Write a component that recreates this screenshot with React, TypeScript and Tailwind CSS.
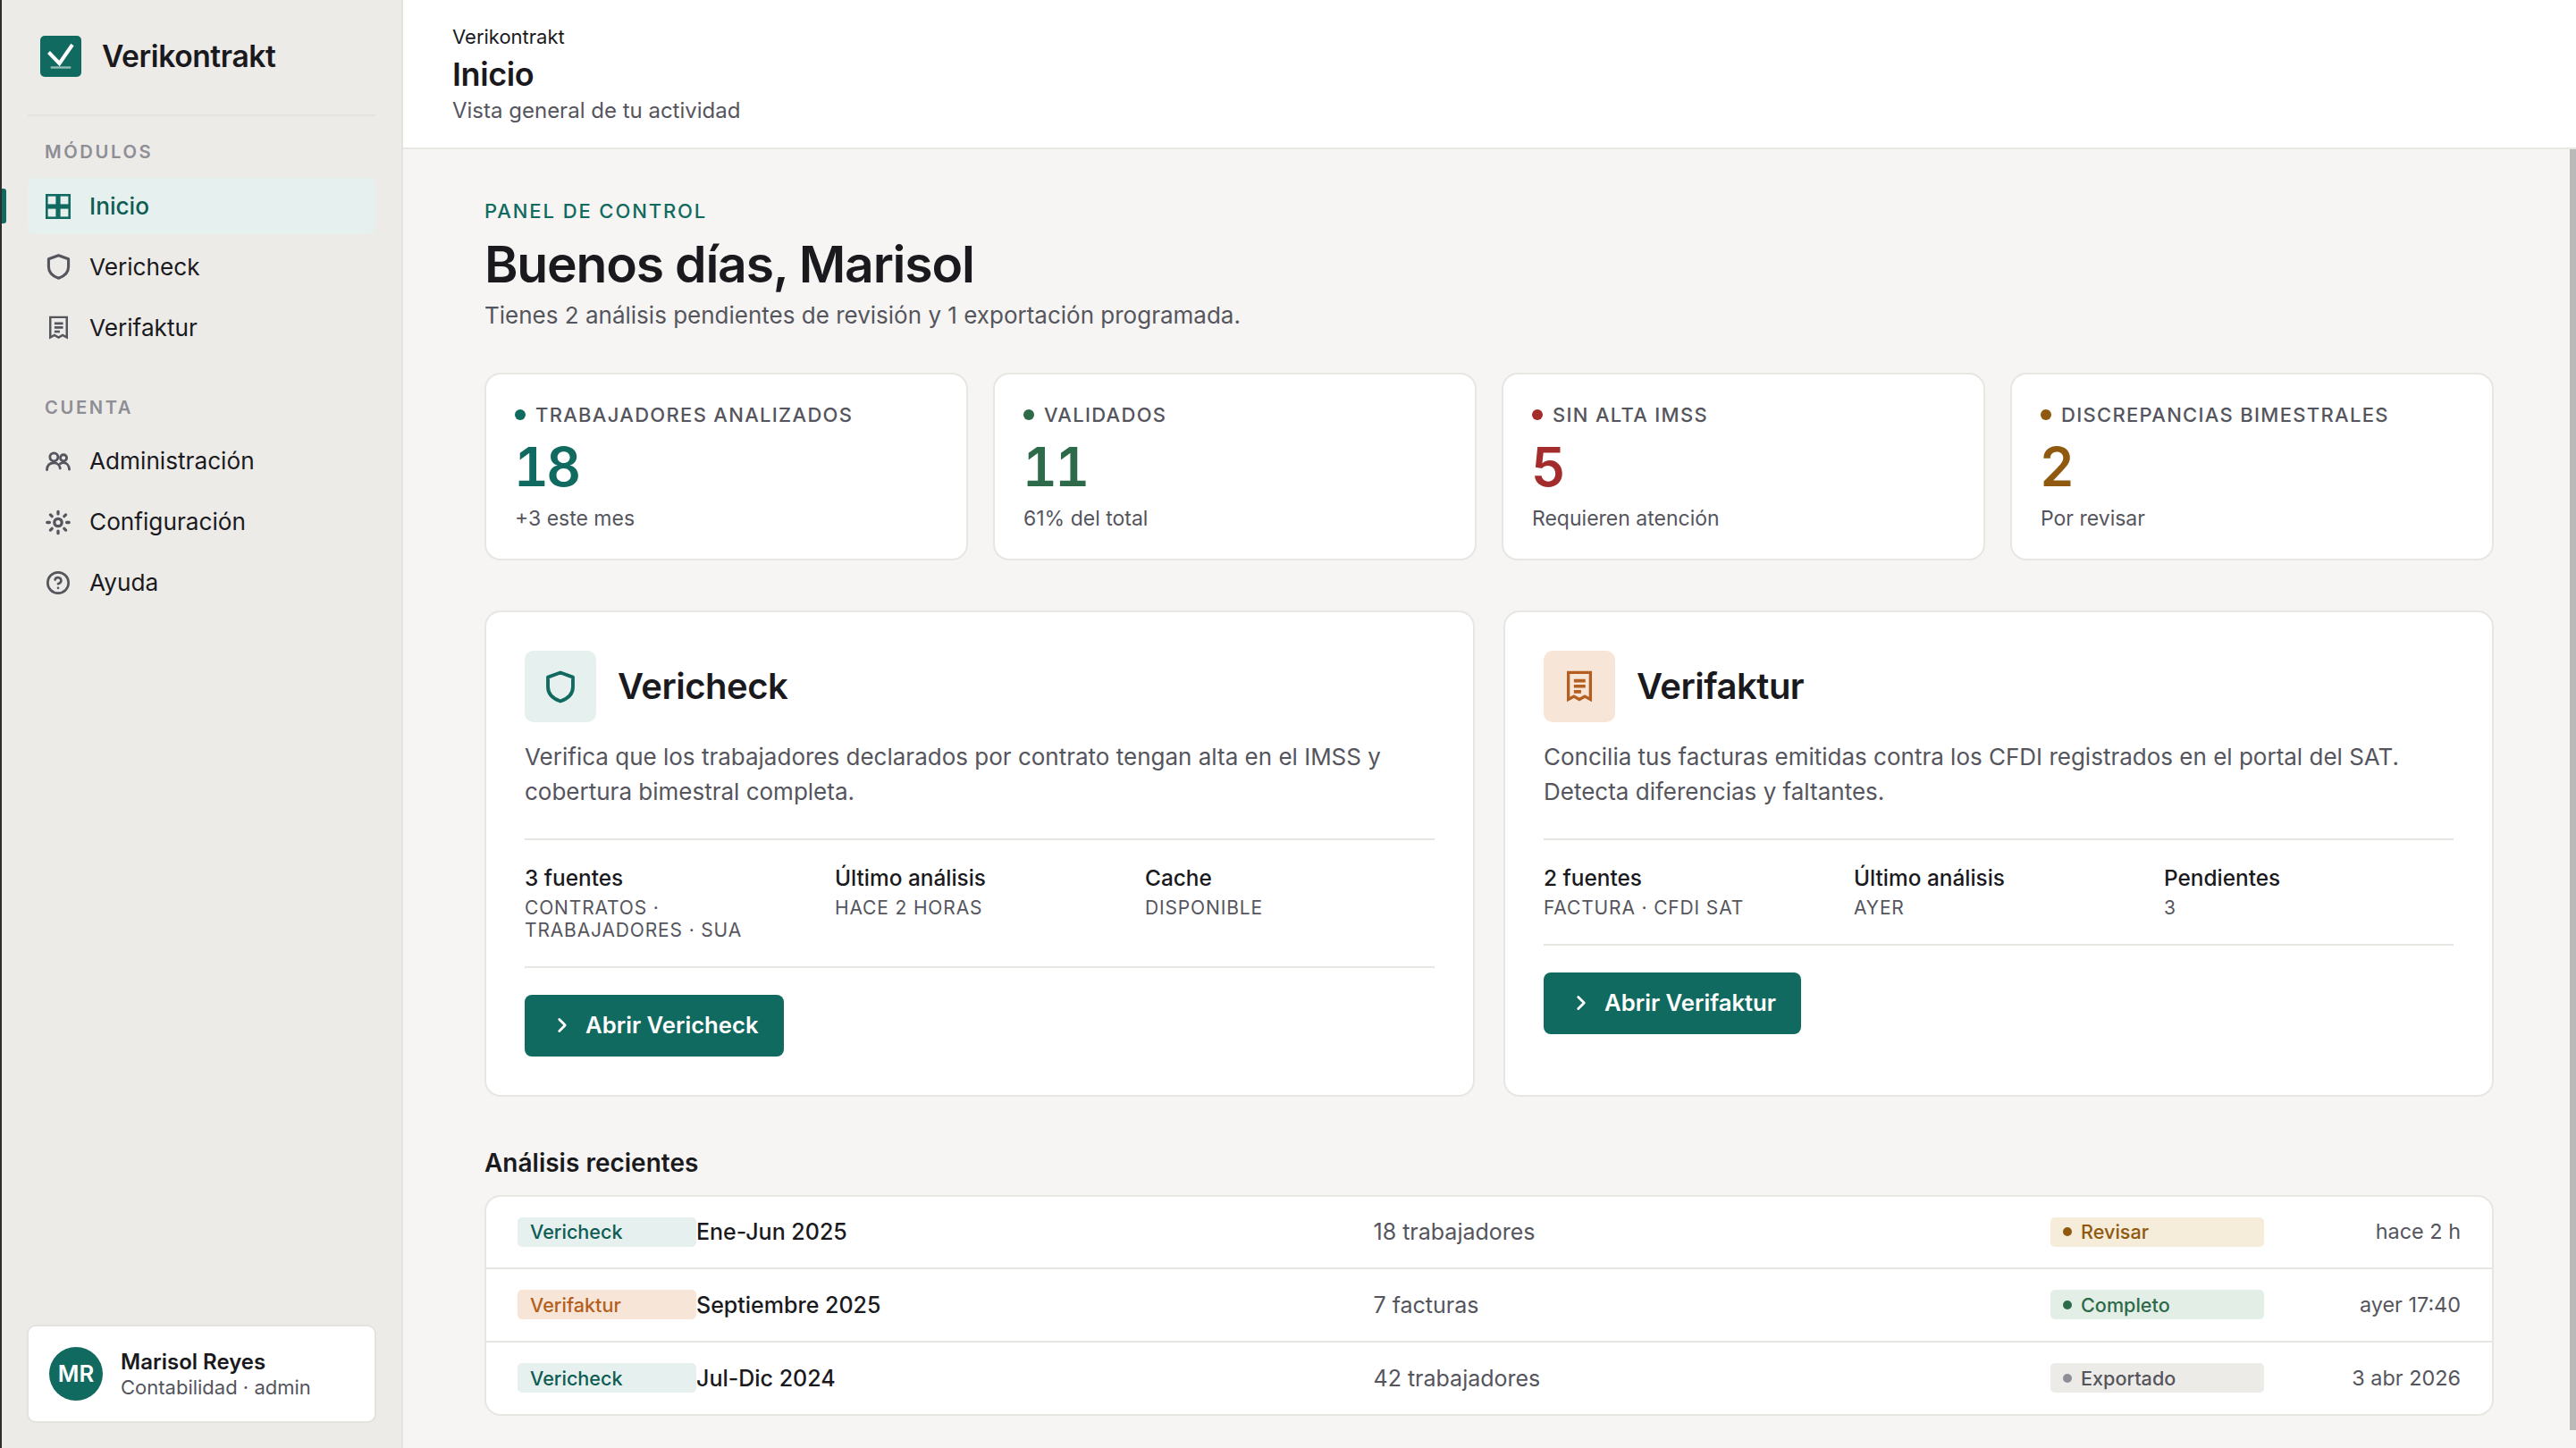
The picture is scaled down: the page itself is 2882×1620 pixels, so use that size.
import React from "react";
import { ChevronRight, CircleHelp } from "lucide-react";

function GridIcon({ className }: { className?: string }) {
  return (
    <svg viewBox="0 0 28 28" className={className} fill="none" stroke="currentColor" strokeWidth="2.6">
      <rect x="1.3" y="1.3" width="11.4" height="11.4" />
      <rect x="15.3" y="1.3" width="11.4" height="11.4" />
      <rect x="1.3" y="15.3" width="11.4" height="11.4" />
      <rect x="15.3" y="15.3" width="11.4" height="11.4" />
    </svg>
  );
}

function ShieldIcon({ className }: { className?: string }) {
  return (
    <svg viewBox="0 0 28 30" className={className} fill="none" stroke="currentColor" strokeWidth="3.2" strokeLinejoin="round">
      <path d="M14 1.8 L25.5 6 V15 C25.5 21.5 20.5 26 14 28.2 C7.5 26 2.5 21.5 2.5 15 V6 Z" />
    </svg>
  );
}

function ReceiptIcon({ className }: { className?: string }) {
  return (
    <svg viewBox="0 0 22 28" className={className} fill="none" stroke="currentColor" strokeWidth="2.6">
      <path d="M1.3 1.3 H20.7 V25 L15.8 22.3 L11 25 L6.2 22.3 L1.3 25 Z" />
      <path d="M6.2 8.6 H16.3 M6.2 13.4 H16.3 M6.2 18.2 H12.5" strokeWidth="2.8" />
    </svg>
  );
}

function UsersIcon({ className }: { className?: string }) {
  return (
    <svg viewBox="0 0 30 24" className={className} fill="none" stroke="currentColor" strokeWidth="3" strokeLinecap="round">
      <circle cx="10" cy="6.5" r="4.8" />
      <circle cx="21.5" cy="7.5" r="3.8" />
      <path d="M1.6 21.8 C2 15.5 6 13.5 10 13.5 C14 13.5 17 16.5 17.5 20" />
      <path d="M17.5 14.5 C19 13.5 20 13.3 21.5 13.3 C25 13.3 28 16 28.4 21.3" />
    </svg>
  );
}

function SunGearIcon({ className }: { className?: string }) {
  return (
    <svg viewBox="0 0 28 28" className={className} fill="none" stroke="currentColor" strokeWidth="3.3" strokeLinecap="round">
      <circle cx="14" cy="14" r="4.2" />
      <path d="M14 1.8 V4.4 M14 23.6 V26.2 M1.8 14 H4.4 M23.6 14 H26.2 M5.4 5.4 L7.2 7.2 M20.8 20.8 L22.6 22.6 M5.4 22.6 L7.2 20.8 M20.8 7.2 L22.6 5.4" />
    </svg>
  );
}

function Logo() {
  return (
    <div className="w-[46px] h-[46px] rounded-[5px] bg-[#116a60] flex items-center justify-center shrink-0">
      <svg viewBox="0 0 46 46" className="w-[46px] h-[46px]" fill="none">
        <path d="M9.5 18.5 L21.5 31 L36 10" stroke="#ffffff" strokeWidth="4" />
        <path d="M11.7 35.5 H34.3" stroke="#ffffff" strokeOpacity="0.55" strokeWidth="2.4" />
      </svg>
    </div>
  );
}

type NavItem = { label: string; icon: React.ReactNode; active?: boolean };

const modulos: NavItem[] = [
  { label: "Inicio", icon: <GridIcon className="w-[28px] h-[28px]" />, active: true },
  { label: "Vericheck", icon: <ShieldIcon className="w-[27px] h-[29px]" /> },
  { label: "Verifaktur", icon: <ReceiptIcon className="w-[21px] h-[28px]" /> },
];

const cuenta: NavItem[] = [
  { label: "Administración", icon: <UsersIcon className="w-[29px] h-[23px]" /> },
  { label: "Configuración", icon: <SunGearIcon className="w-[29px] h-[29px]" /> },
  { label: "Ayuda", icon: <CircleHelp className="w-[30px] h-[30px]" strokeWidth={2.3} /> },
];

function NavRow({ item }: { item: NavItem }) {
  return (
    <div className={`h-[63px] rounded-[8px] flex items-center pl-[20px] ${item.active ? "bg-[#e6f0ee] text-[#0e5d54] font-medium" : "text-[#1a1a1e]"}`}>
      <span className={`w-[28px] flex justify-center shrink-0 ${item.active ? "text-[#116a60]" : "text-[#55555d]"}`}>{item.icon}</span>
      <span className="ml-[21px] text-[26.2px] leading-[34px]">{item.label}</span>
    </div>
  );
}

const stats = [
  { label: "TRABAJADORES ANALIZADOS", value: "18", sub: "+3 este mes", dot: "bg-[#116a60]", color: "text-[#116a60]" },
  { label: "VALIDADOS", value: "11", sub: "61% del total", dot: "bg-[#2d6a4a]", color: "text-[#2d6a4a]" },
  { label: "SIN ALTA IMSS", value: "5", sub: "Requieren atención", dot: "bg-[#a32d2d]", color: "text-[#a32d2d]" },
  { label: "DISCREPANCIAS BIMESTRALES", value: "2", sub: "Por revisar", dot: "bg-[#8f5a10]", color: "text-[#8f5a10]" },
];

const rows = [
  { mod: "Vericheck", modCls: "bg-[#e6f0ee] text-[#0e5d54]", period: "Ene-Jun 2025", count: "18 trabajadores", status: "Revisar", stCls: "bg-[#f6ecda] text-[#8f5a10]", dot: "bg-[#8f5a10]", time: "hace 2 h" },
  { mod: "Verifaktur", modCls: "bg-[#f7e6d8] text-[#b45f20]", period: "Septiembre 2025", count: "7 facturas", status: "Completo", stCls: "bg-[#e3efe6] text-[#2d6a4a]", dot: "bg-[#2d6a4a]", time: "ayer 17:40" },
  { mod: "Vericheck", modCls: "bg-[#e6f0ee] text-[#0e5d54]", period: "Jul-Dic 2024", count: "42 trabajadores", status: "Exportado", stCls: "bg-[#edebe7] text-[#55555d]", dot: "bg-[#8e8e96]", time: "3 abr 2026" },
];

function Meta({ title, sub }: { title: string; sub: string }) {
  return (
    <div>
      <div className="text-[24.4px] leading-[32px] font-medium text-[#1a1a1e]">{title}</div>
      <div className="mt-[4.5px] text-[21px] leading-[25px] tracking-[0.85px] text-[#55555d]">{sub}</div>
    </div>
  );
}

function ModuleCard(props: {
  name: string;
  iconBox: string;
  icon: React.ReactNode;
  desc: string;
  metas: { title: string; sub: string }[];
  cta: string;
}) {
  return (
    <div className="bg-white border-2 border-[#e8e6e2] rounded-[18px] p-[43px]">
      <div className="flex items-center gap-[24px]">
        <div className={`w-[80px] h-[80px] rounded-[10px] flex items-center justify-center ${props.iconBox}`}>{props.icon}</div>
        <div className="text-[40px] leading-[54px] font-semibold tracking-[-0.5px] text-[#1a1a1e]">{props.name}</div>
      </div>
      <p className="mt-[20px] pb-[33px] border-b-2 border-[#e8e6e2] text-[26px] leading-[38.6px] text-[#55555d]">{props.desc}</p>
      <div className="grid grid-cols-3 gap-x-[23px] pt-[26px] pb-[28px] border-b-2 border-[#e8e6e2]">
        {props.metas.map((m) => (
          <Meta key={m.title} title={m.title} sub={m.sub} />
        ))}
      </div>
      <button className="mt-[30px] h-[69px] pl-[29px] pr-[28px] rounded-[8px] bg-[#116a60] text-white flex items-center gap-[13px] text-[25.7px] font-semibold">
        <ChevronRight className="w-[26px] h-[26px]" strokeWidth={2.6} />
        {props.cta}
      </button>
    </div>
  );
}

export default function App() {
  return (
    <div className="w-[2882px] h-[1620px] flex overflow-hidden bg-[#f6f5f3] font-['Inter',sans-serif]">
      <div className="w-[2px] bg-[#2e2e2e] shrink-0" />
      <aside className="relative w-[449px] shrink-0 flex flex-col bg-[#edebe7] border-r-2 border-[#e4e2dc] px-[29px]">
        <div className="pt-[39px] pb-[42px] pl-[14px] flex items-center gap-[23px] border-b-2 border-[#e4e2dc]">
          <Logo />
          <span className="pt-[1px] text-[33.6px] leading-[46px] font-semibold tracking-[-0.4px] text-[#1a1a1e]">Verikontrakt</span>
        </div>
        <div className="mt-[28px] mb-[17px] pl-[19px] text-[20.2px] leading-[24px] font-semibold tracking-[2.6px] text-[#8e8e96]">MÓDULOS</div>
        <div className="flex flex-col gap-[5px]">
          {modulos.map((i) => (
            <NavRow key={i.label} item={i} />
          ))}
        </div>
        <div className="mt-[46px] mb-[16.5px] pl-[19px] text-[20.2px] leading-[24px] font-semibold tracking-[2.6px] text-[#8e8e96]">CUENTA</div>
        <div className="flex flex-col gap-[5px]">
          {cuenta.map((i) => (
            <NavRow key={i.label} item={i} />
          ))}
        </div>
        <div className="mt-auto mb-[28px] -mx-[1px] h-[110px] rounded-[10px] bg-white border-2 border-[#e4e2dc] flex items-center pl-[23px] gap-[20px]">
          <div className="w-[60px] h-[60px] rounded-full bg-[#116a60] text-white flex items-center justify-center text-[25.7px] font-semibold">MR</div>
          <div>
            <div className="text-[24px] leading-[30px] font-semibold text-[#1a1a1e]">Marisol Reyes</div>
            <div className="text-[22px] leading-[26px] text-[#55555d]">Contabilidad · admin</div>
          </div>
        </div>
        {/* active marker */}
        <div className="absolute left-0 top-[211px] w-[5px] h-[39px] rounded-r-[3px] bg-[#116a60]" />
      </aside>

      <main className="relative flex-1 min-w-0 flex flex-col">
        <header className="h-[167px] shrink-0 bg-white border-b-2 border-[#e8e6e2] pl-[55px] pt-[26px]">
          <div className="text-[22px] leading-[30px] text-[#1a1a1e]">Verikontrakt</div>
          <div className="mt-[5px] text-[36px] leading-[44px] font-semibold tracking-[-0.4px] text-[#1a1a1e]">Inicio</div>
          <div className="mt-[2px] text-[24px] leading-[34px] text-[#55555d]">Vista general de tu actividad</div>
        </header>

        <div className="pl-[91px] pr-[92px] pt-[55px]">
          <div className="text-[22px] leading-[28px] font-medium tracking-[1.9px] text-[#116a60]">PANEL DE CONTROL</div>
          <h1 className="mt-[11px] text-[57px] leading-[70px] font-semibold tracking-[-1.2px] text-[#1a1a1e]">Buenos días, Marisol</h1>
          <p className="mt-[3px] text-[26px] leading-[38px] text-[#55555d]">Tienes 2 análisis pendientes de revisión y 1 exportación programada.</p>

          <div className="mt-[45px] grid grid-cols-4 gap-[28px]">
            {stats.map((s) => (
              <div key={s.label} className="h-[210px] bg-white border-2 border-[#e8e6e2] rounded-[18px] px-[32px] pt-[31px]">
                <div className="flex items-center gap-[11px] h-[28px]">
                  <span className={`w-[12px] h-[12px] rounded-full ${s.dot}`} />
                  <span className="text-[22px] leading-[28px] font-medium tracking-[1.3px] text-[#55555d]">{s.label}</span>
                </div>
                <div className={`mt-[9px] -ml-[1px] text-[60px] leading-[70px] font-semibold tabular-nums tracking-[-2.5px] ${s.color}`}>{s.value}</div>
                <div className="mt-[7px] text-[23px] leading-[32px] text-[#55555d]">{s.sub}</div>
              </div>
            ))}
          </div>

          <div className="mt-[56px] grid grid-cols-2 gap-[32px]">
            <ModuleCard
              name="Vericheck"
              iconBox="bg-[#e6f0ee]"
              icon={<ShieldIcon className="w-[34px] h-[39px] text-[#116a60]" />}
              desc="Verifica que los trabajadores declarados por contrato tengan alta en el IMSS y cobertura bimestral completa."
              metas={[
                { title: "3 fuentes", sub: "CONTRATOS · TRABAJADORES · SUA" },
                { title: "Último análisis", sub: "HACE 2 HORAS" },
                { title: "Cache", sub: "DISPONIBLE" },
              ]}
              cta="Abrir Vericheck"
            />
            <ModuleCard
              name="Verifaktur"
              iconBox="bg-[#f7e6d8]"
              icon={<ReceiptIcon className="w-[28px] h-[37px] text-[#b45f20]" />}
              desc="Concilia tus facturas emitidas contra los CFDI registrados en el portal del SAT. Detecta diferencias y faltantes."
              metas={[
                { title: "2 fuentes", sub: "FACTURA · CFDI SAT" },
                { title: "Último análisis", sub: "AYER" },
                { title: "Pendientes", sub: "3" },
              ]}
              cta="Abrir Verifaktur"
            />
          </div>

          <h2 className="mt-[56px] text-[28px] leading-[36px] font-semibold text-[#1a1a1e]">Análisis recientes</h2>
          <div className="mt-[18px] bg-white border-2 border-[#e8e6e2] rounded-[18px] overflow-hidden">
            {rows.map((r, i) => (
              <div key={i} className={`px-[35px] grid grid-cols-[200px_1fr_1fr_239px_220px] items-center ${i === 0 ? "h-[79.5px]" : i === 1 ? "h-[81.5px] border-t-2 border-[#e8e6e2]" : "h-[82.5px] border-t-2 border-[#e8e6e2]"}`}>
                <span className={`h-[33px] rounded-[5px] pl-[14px] flex items-center text-[21.6px] font-medium ${r.modCls}`}>{r.mod}</span>
                <span className="text-[25px] leading-[34px] font-medium text-[#1a1a1e]">{r.period}</span>
                <span className="text-[25px] leading-[34px] text-[#55555d]">{r.count}</span>
                <span className={`h-[33px] rounded-[5px] pl-[14px] flex items-center gap-[10px] text-[21.6px] font-medium ${r.stCls}`}>
                  <span className={`w-[10px] h-[10px] rounded-full ${r.dot}`} />
                  {r.status}
                </span>
                <span className="text-right text-[23.4px] leading-[34px] text-[#55555d]">{r.time}</span>
              </div>
            ))}
          </div>
        </div>

        {/* scrollbar thumb */}
        <div className="absolute right-0 top-[167px] w-[7px] h-[1433px] bg-[#b9b9b9]" />
      </main>
    </div>
  );
}
